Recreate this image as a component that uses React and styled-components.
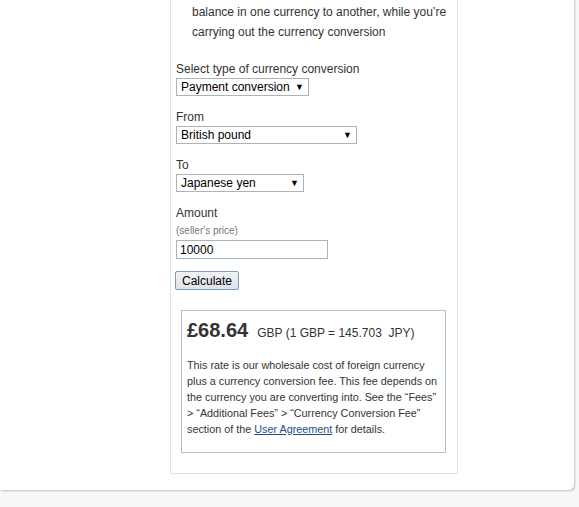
import React, { useState } from "react";
import styled, { createGlobalStyle } from "styled-components";

const GlobalStyle = createGlobalStyle`
  html, body {
    margin: 0;
    padding: 0;
    background: #f7f7f7;
    font-family: "Liberation Sans", Arial, sans-serif;
    color: #333;
    overflow: hidden;
  }
`;

const Page = styled.div`
  width: 579px;
  height: 507px;
  overflow: hidden;
`;

const Card = styled.div`
  width: 574px;
  margin-top: -18px;
  padding-bottom: 16px;
  background: #fff;
  border-radius: 0 0 5px 0;
  box-shadow: 1px 1px 2px rgba(0, 0, 0, 0.22);
`;

const Panel = styled.div`
  margin-left: 170px;
  width: 276px;
  padding: 0 5px 20px 5px;
  border: 1px solid #e2e2e2;
  border-top: none;
`;

const Intro = styled.ul`
  margin: 0 0 19px;
  padding: 0 0 0 16px;
  font-size: 12px;
  line-height: 20px;
  color: #333;
`;

const Field = styled.div`
  display: flex;
  flex-direction: column;
  align-items: flex-start;
  margin-bottom: ${(p) => p.$after ?? 13}px;
`;

const Label = styled.label`
  font-size: 12px;
  line-height: 14px;
  padding-top: 1px;
  margin-bottom: ${(p) => p.$gap ?? 2}px;
`;

const Hint = styled.span`
  font-size: 10px;
  line-height: 12px;
  color: #777;
  margin-bottom: 3px;
`;

const SelectWrap = styled.div`
  position: relative;
  width: ${(p) => p.$w}px;
`;

const Select = styled.select`
  appearance: none;
  display: block;
  width: 100%;
  height: 18px;
  margin: 0;
  padding: 0 16px 0 4px;
  border: 1px solid #a9b4bd;
  border-radius: 0;
  background: #fff;
  font-family: "Liberation Sans", Arial, sans-serif;
  font-size: 12px;
  color: #000;
  outline: none;
`;

const Arrow = styled.span`
  position: absolute;
  right: 5px;
  top: 3px;
  font-size: 9px;
  line-height: 12px;
  color: #000;
  pointer-events: none;
`;

const Input = styled.input`
  box-sizing: border-box;
  display: block;
  width: 152px;
  height: 19px;
  margin: 0;
  padding: 0 3px;
  border: 1px solid #a9b4bd;
  font-family: "Liberation Sans", Arial, sans-serif;
  font-size: 12px;
  color: #000;
  outline: none;
`;

const Button = styled.button`
  display: block;
  box-sizing: border-box;
  height: 19px;
  margin: 0 0 20px -1px;
  padding: 0 6px;
  border: 1px solid #7f9db9;
  border-radius: 2px;
  background: linear-gradient(#f2f2f2, #dde3ea);
  font-family: "Liberation Sans", Arial, sans-serif;
  font-size: 12px;
  color: #000;
  cursor: pointer;
`;

const Result = styled.div`
  margin-left: 5px;
  width: 253px;
  padding: 7px 5px 15px;
  border: 1px solid #b3c1cc;
`;

const Headline = styled.div`
  display: flex;
  align-items: baseline;
  gap: 9px;
  height: 24px;
  line-height: 24px;
  margin-bottom: 15px;
`;

const Amount = styled.span`
  font-size: 20px;
  font-weight: bold;
  color: #333;
`;

const Rate = styled.span`
  font-size: 12px;
  color: #333;
`;

const Note = styled.p`
  margin: 0;
  font-size: 10.8px;
  line-height: 16px;
  color: #333;
`;

const Link = styled.a`
  color: #1a4d80;
  text-decoration: underline;
`;

const Dropdown = ({ w, value, options, onChange }) => (
  <SelectWrap $w={w}>
    <Select value={value} onChange={(e) => onChange(e.target.value)}>
      {options.map((o) => (
        <option key={o}>{o}</option>
      ))}
    </Select>
    <Arrow>▼</Arrow>
  </SelectWrap>
);

export default function App() {
  const [type, setType] = useState("Payment conversion");
  const [from, setFrom] = useState("British pound");
  const [to, setTo] = useState("Japanese yen");
  const [amount, setAmount] = useState("10000");

  return (
    <Page>
      <GlobalStyle />
      <Card>
        <Panel>
          <Intro>
            <li>
              A conversion rate is used to help convert your balance in one
              currency to another, while you’re carrying out the currency
              conversion
            </li>
          </Intro>

          <Field>
            <Label>Select type of currency conversion</Label>
            <Dropdown
              w={133}
              value={type}
              onChange={setType}
              options={["Payment conversion", "Balance conversion"]}
            />
          </Field>

          <Field>
            <Label>From</Label>
            <Dropdown
              w={181}
              value={from}
              onChange={setFrom}
              options={["British pound", "Euro", "US dollar"]}
            />
          </Field>

          <Field>
            <Label>To</Label>
            <Dropdown
              w={128}
              value={to}
              onChange={setTo}
              options={["Japanese yen", "Euro", "US dollar"]}
            />
          </Field>

          <Field $after={12}>
            <Label $gap={5}>Amount</Label>
            <Hint>(seller's price)</Hint>
            <Input value={amount} onChange={(e) => setAmount(e.target.value)} />
          </Field>

          <Button>Calculate</Button>

          <Result>
            <Headline>
              <Amount>£68.64</Amount>
              <Rate>GBP (1 GBP = 145.703&nbsp; JPY)</Rate>
            </Headline>
            <Note>
              This rate is our wholesale cost of foreign currency plus a currency
              conversion fee. This fee depends on the currency you are converting
              into. See the “Fees” &gt; “Additional Fees” &gt; “Currency
              Conversion Fee” section of the <Link href="#">User Agreement</Link>{" "}
              for details.
            </Note>
          </Result>
        </Panel>
      </Card>
    </Page>
  );
}
